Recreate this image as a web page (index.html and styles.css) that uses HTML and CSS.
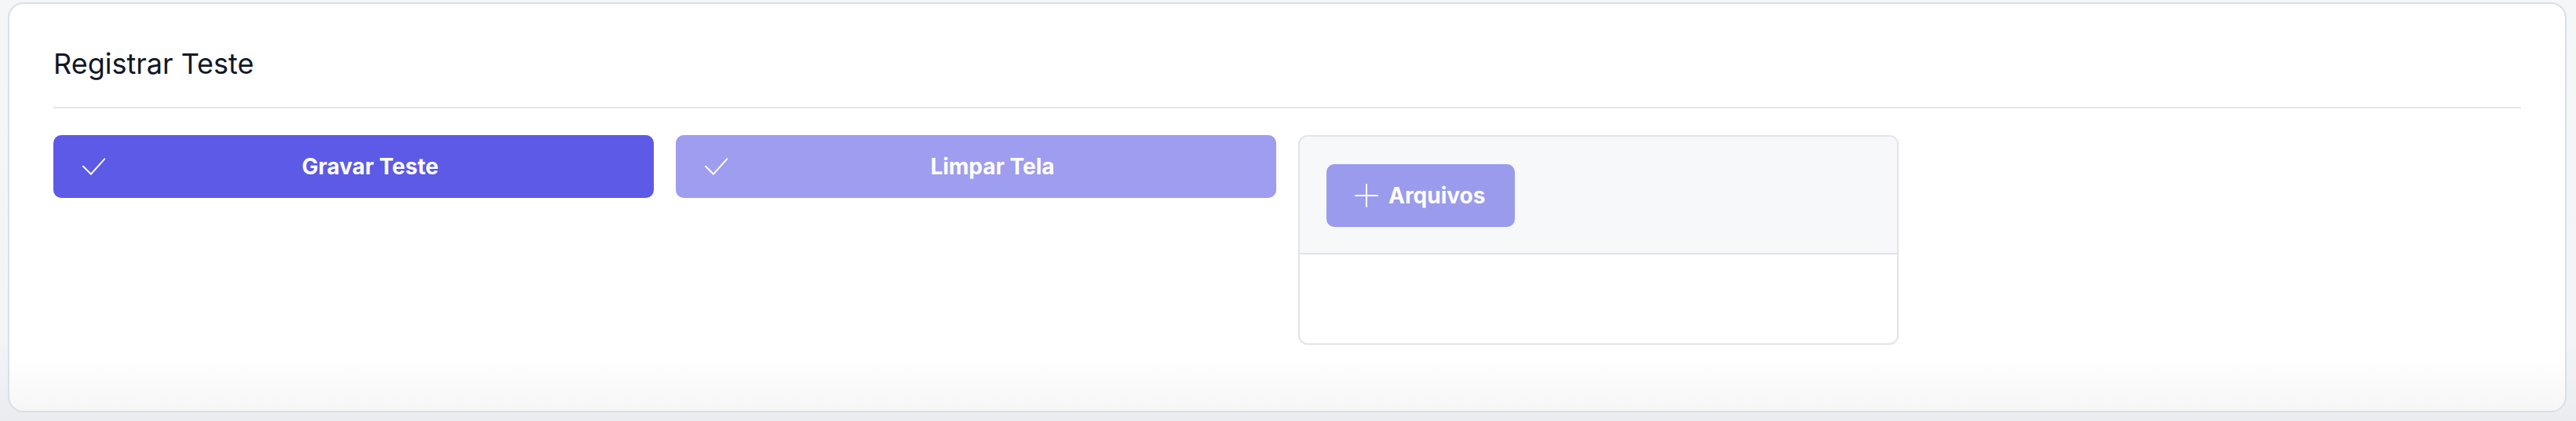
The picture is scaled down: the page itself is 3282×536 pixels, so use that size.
FILE: index.html
```html
<!DOCTYPE html>
<html lang="pt-BR">
<head>
<meta charset="utf-8">
<title>Registrar Teste</title>
<link rel="stylesheet" href="styles.css">
</head>
<body>
<main class="card">
  <h1 class="card-title">Registrar Teste</h1>
  <hr class="divider">
  <div class="actions">
    <button class="btn btn-primary" type="button">
      <svg class="btn-icon" viewBox="0 0 30 30" width="30" height="30" aria-hidden="true"><path d="M2 14.7 L12 24.7 L29.3 5.3" fill="none" stroke="#fff" stroke-width="2" stroke-linecap="round" stroke-linejoin="round"/></svg>
      <span class="btn-label">Gravar Teste</span>
    </button>
    <button class="btn btn-light" type="button">
      <svg class="btn-icon" viewBox="0 0 30 30" width="30" height="30" aria-hidden="true"><path d="M2 14.7 L12 24.7 L29.3 5.3" fill="none" stroke="#fff" stroke-width="2" stroke-linecap="round" stroke-linejoin="round"/></svg>
      <span class="btn-label">Limpar Tela</span>
    </button>
    <section class="files">
      <div class="files-head">
        <button class="btn-add" type="button">
          <svg class="add-icon" viewBox="0 0 30 30" width="30" height="30" aria-hidden="true"><path d="M15 1 V29 M1 15 H29" fill="none" stroke="#fff" stroke-width="2" stroke-linecap="round"/></svg>
          <span>Arquivos</span>
        </button>
      </div>
      <div class="files-body"></div>
    </section>
  </div>
</main>
</body>
</html>
```

FILE: styles.css
```css
* {
  box-sizing: border-box;
}

html, body {
  height: 100%;
}

body {
  margin: 0;
  padding: 3px 12px 0 10px;
  font-family: Inter, "Noto Sans", "Liberation Sans", sans-serif;
  background: linear-gradient(to bottom, #f4f6f8 0%, #f3f4f6 80%, #eaecef 100%);
  overflow: hidden;
}

.card {
  height: 522px;
  border: 2px solid #d8e0ea;
  border-radius: 20px;
  padding: 54px 56px 0;
  background: linear-gradient(to bottom, #ffffff 0%, #ffffff 86%, #f6f6f7 100%);
}

.card-title {
  margin: 0;
  font-size: 36px;
  line-height: 44px;
  font-weight: 400;
  color: #111827;
  letter-spacing: 0;
}

.divider {
  margin: 33px 0 0;
  border: 0;
  height: 2px;
  background: #e2e4ea;
}

.actions {
  margin-top: 34px;
  display: grid;
  grid-template-columns: repeat(4, 1fr);
  column-gap: 28px;
  align-items: start;
}

.btn {
  height: 80px;
  display: flex;
  align-items: center;
  gap: 12px;
  padding: 0 36px;
  border: 0;
  border-radius: 10px;
  color: #fff;
  font-family: inherit;
  font-size: 28px;
  font-weight: 700;
  cursor: pointer;
}

.btn-primary {
  background: #5c5ae7;
}

.btn-light {
  background: #9f9def;
}

.btn-icon {
  flex: none;
  display: block;
}

.btn-label {
  flex: 1;
  text-align: center;
}

.files {
  border: 2px solid #e3e4ea;
  border-radius: 12px;
  overflow: hidden;
  background: #fff;
}

.files-head {
  background: #f7f8fa;
  padding: 35px 34px 33px;
  border-bottom: 2px solid #e3e4ea;
  display: flex;
}

.btn-add {
  height: 80px;
  display: flex;
  align-items: center;
  gap: 13px;
  padding: 0 38px 0 36px;
  border: 0;
  border-radius: 10px;
  background: #9b9bed;
  color: #fff;
  font-family: inherit;
  font-size: 28px;
  font-weight: 700;
  cursor: pointer;
}

.add-icon {
  display: block;
  flex: none;
}

.files-body {
  height: 113px;
}
```
